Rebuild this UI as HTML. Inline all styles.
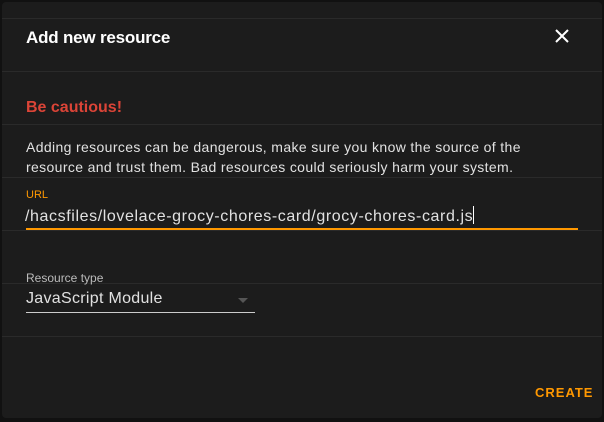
<!DOCTYPE html>
<html><head><style>
html,body{margin:0;padding:0;width:604px;height:422px;background:#111;overflow:hidden;font-family:"Liberation Sans",sans-serif}
.d{position:absolute;left:2px;top:2px;width:600px;height:416px;background:#1c1c1c;border-radius:4px;overflow:hidden}
.l{position:absolute;left:0;width:600px;height:1px;background:#2a2a2a}
.t{position:absolute;white-space:nowrap}
</style></head><body>
<div class="d">
<div class="l" style="top:16px"></div>
<div class="l" style="top:69px"></div>
<div class="l" style="top:122px"></div>
<div class="l" style="top:175px"></div>
<div class="l" style="top:228px"></div>
<div class="l" style="top:281px"></div>
<div class="l" style="top:334px"></div>
<div class="t" style="left:24px;top:26px;font-size:17px;color:#fff;font-weight:bold;letter-spacing:-0.2px">Add new resource</div>
<svg style="position:absolute;left:552px;top:26px" width="16" height="16" viewBox="0 0 16 16"><path d="M2 2L14 14M14 2L2 14" stroke="#fff" stroke-width="2"/></svg>
<div class="t" style="left:24px;top:97px;font-size:16px;color:#db4437;font-weight:bold">Be cautious!</div>
<div class="t" style="left:24px;top:135px;font-size:14px;color:#e1e1e1;line-height:20px;letter-spacing:0.36px">Adding resources can be dangerous, make sure you know the source of the<br>resource and trust them. Bad resources could seriously harm your system.</div>
<div class="t" style="left:24px;top:187px;font-size:11px;color:#ff9800">URL</div>
<div class="t" style="left:23px;top:204px;font-size:16px;color:#e1e1e1;letter-spacing:0.6px">/hacsfiles/lovelace-grocy-chores-card/grocy-chores-card.js<span style="display:inline-block;width:1px;height:18px;background:#fff;vertical-align:-3px"></span></div>
<div style="position:absolute;left:24px;top:226px;width:552px;height:2px;background:#ff9800"></div>
<div class="t" style="left:24px;top:269px;font-size:12px;color:#bbb">Resource type</div>
<div class="t" style="left:24px;top:288px;font-size:16px;color:#e1e1e1;letter-spacing:0.3px">JavaScript Module</div>
<div style="position:absolute;left:236px;top:296px;width:0;height:0;border-left:5px solid transparent;border-right:5px solid transparent;border-top:5px solid #555"></div>
<div style="position:absolute;left:24px;top:310px;width:229px;height:1px;background:#ccc"></div>
<div class="t" style="left:533px;top:383px;font-size:13px;color:#ff9800;font-weight:bold;letter-spacing:1px">CREATE</div>
</div>
</body></html>
